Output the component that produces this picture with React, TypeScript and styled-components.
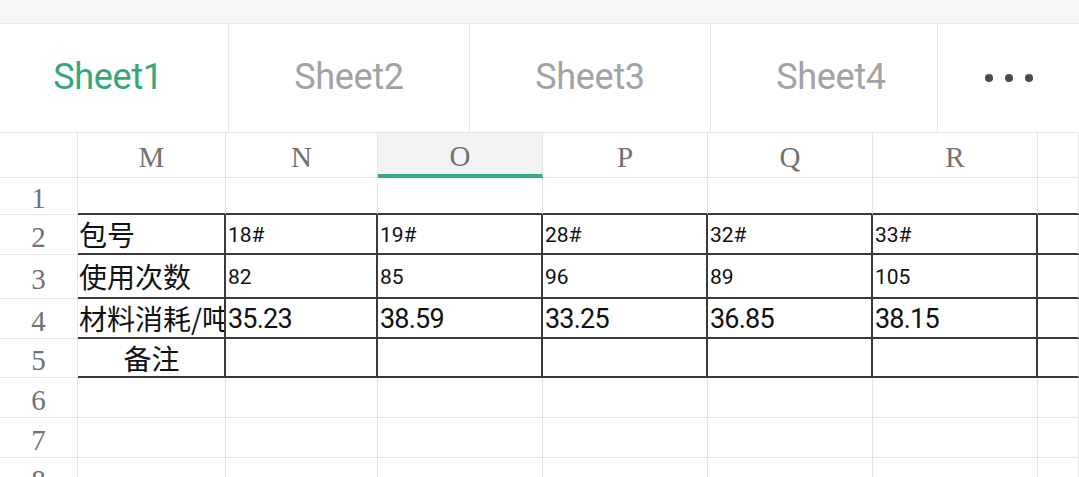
import React from "react";
import styled, { createGlobalStyle, css } from "styled-components";

const GlobalStyle = createGlobalStyle`
  html, body {
    margin: 0;
    padding: 0;
    background: #ffffff;
    overflow: hidden;
  }
  body {
    font-family: "Noto Sans", Roboto, sans-serif;
  }
  * { box-sizing: border-box; }
`;

const Page = styled.div`
  width: 1079px;
  height: 477px;
  overflow: hidden;
  background: #fff;
  display: flex;
  flex-direction: column;
`;

const TopBar = styled.div`
  height: 24px;
  flex-shrink: 0;
  background: #f7f7f7;
  border-bottom: 1px solid #e9e9e9;
`;

const TabBar = styled.div`
  position: relative;
  height: 109px;
  flex-shrink: 0;
  border-bottom: 1px solid #e6e6e6;
  overflow: hidden;
  background: #fff;
`;

const TabList = styled.div`
  display: flex;
  height: 100%;
  margin-left: -12px;
`;

const Tab = styled.div<{ $active?: boolean }>`
  width: 241px;
  flex-shrink: 0;
  height: 100%;
  display: flex;
  align-items: center;
  justify-content: center;
  padding-bottom: 2px;
  border-right: 1px solid #e8e8e8;
  font-family: Roboto, "Noto Sans", sans-serif;
  font-size: 36px;
  letter-spacing: -0.3px;
  color: ${(p) => (p.$active ? "#35a878" : "#a3a3a3")};
`;

const MoreButton = styled.div`
  position: absolute;
  top: 0;
  right: 0;
  bottom: 0;
  width: 142px;
  background: #fff;
  border-left: 1px solid #e8e8e8;
  display: flex;
  align-items: center;
  justify-content: center;
  gap: 12px;
`;

const Dot = styled.span`
  width: 8px;
  height: 8px;
  border-radius: 50%;
  background: #4a4a4a;
`;

const Sheet = styled.div`
  display: grid;
  grid-template-columns: 78px 148px 152px 165px 165px 165px 165px 1fr;
  grid-template-rows: 45px 37px 40px 44px 40px 39px 40px 40px 40px;
`;

const LIGHT = "#e4e4e4";
const DARK = "#3a3a3a";

const HeaderCell = styled.div<{ $active?: boolean }>`
  display: flex;
  align-items: center;
  justify-content: center;
  padding-top: 5px;
  border-right: 1px solid ${LIGHT};
  border-bottom: 1px solid ${LIGHT};
  font-family: "Liberation Serif", "Times New Roman", serif;
  font-size: 29px;
  color: #727272;
  background: #fff;
  ${(p) =>
    p.$active &&
    css`
      background: #f3f3f3;
      border-bottom: 4px solid #34ad7c;
    `}
`;

const RowNumber = styled.div`
  display: flex;
  align-items: center;
  justify-content: center;
  padding-top: 5px;
  border-right: 1px solid ${LIGHT};
  border-bottom: 1px solid ${LIGHT};
  font-family: "Liberation Serif", "Times New Roman", serif;
  font-size: 29px;
  color: #727272;
  overflow: hidden;
`;

const Cell = styled.div<{
  $darkBottom?: boolean;
  $darkRight?: boolean;
  $size: "label" | "small" | "large";
  $center?: boolean;
}>`
  display: flex;
  align-items: center;
  justify-content: ${(p) => (p.$center ? "center" : "flex-start")};
  padding-left: ${(p) => (p.$size === "label" ? "1px" : "2px")};
  padding-top: ${(p) => (p.$size === "label" ? "0" : "3px")};
  overflow: hidden;
  white-space: nowrap;
  border-right: ${(p) => (p.$darkRight ? `2px solid ${DARK}` : `1px solid ${LIGHT}`)};
  border-bottom: ${(p) => (p.$darkBottom ? `2px solid ${DARK}` : `1px solid ${LIGHT}`)};
  color: #111;
  line-height: 1;
  ${(p) =>
    p.$size === "label"
      ? css`
          font-family: "Noto Sans CJK SC", "Noto Sans", sans-serif;
          font-size: 28px;
        `
      : p.$size === "small"
      ? css`
          font-family: Roboto, "Noto Sans", sans-serif;
          font-size: 21px;
        `
      : css`
          font-family: Roboto, "Noto Sans", sans-serif;
          font-size: 27px;
          letter-spacing: -0.8px;
        `}
`;

const columns = ["M", "N", "O", "P", "Q", "R", ""];
const activeColumn = "O";

type TableRow = { cells: string[]; size: "small" | "large" | "none"; centerLabel?: boolean };

const rows: TableRow[] = [
  { cells: ["", "", "", "", "", "", ""], size: "none" },
  { cells: ["包号", "18#", "19#", "28#", "32#", "33#", ""], size: "small" },
  { cells: ["使用次数", "82", "85", "96", "89", "105", ""], size: "small" },
  { cells: ["材料消耗/吨", "35.23", "38.59", "33.25", "36.85", "38.15", ""], size: "large" },
  { cells: ["备注", "", "", "", "", "", ""], size: "none", centerLabel: true },
  { cells: ["", "", "", "", "", "", ""], size: "none" },
  { cells: ["", "", "", "", "", "", ""], size: "none" },
  { cells: ["", "", "", "", "", "", ""], size: "none" },
];

const tabs = ["Sheet1", "Sheet2", "Sheet3", "Sheet4"];

export default function App() {
  return (
    <>
      <GlobalStyle />
      <Page>
        <TopBar />
        <TabBar>
          <TabList>
            {tabs.map((t, i) => (
              <Tab key={t} $active={i === 0}>
                {t}
              </Tab>
            ))}
          </TabList>
          <MoreButton>
            <Dot />
            <Dot />
            <Dot />
          </MoreButton>
        </TabBar>
        <Sheet>
          <HeaderCell />
          {columns.map((c, i) => (
            <HeaderCell key={`h${i}`} $active={c === activeColumn}>
              {c}
            </HeaderCell>
          ))}
          {rows.map((row, r) => {
            const rowNo = r + 1;
            const inTable = rowNo >= 2 && rowNo <= 5;
            const aboveTable = rowNo === 1;
            return (
              <React.Fragment key={`r${r}`}>
                <RowNumber>{rowNo}</RowNumber>
                {row.cells.map((v, c) => (
                  <Cell
                    key={`c${r}-${c}`}
                    $darkBottom={inTable || aboveTable}
                    $darkRight={inTable && c < 6}
                    $size={c === 0 ? "label" : row.size === "large" ? "large" : "small"}
                    $center={c === 0 && row.centerLabel}
                  >
                    {v}
                  </Cell>
                ))}
              </React.Fragment>
            );
          })}
        </Sheet>
      </Page>
    </>
  );
}
